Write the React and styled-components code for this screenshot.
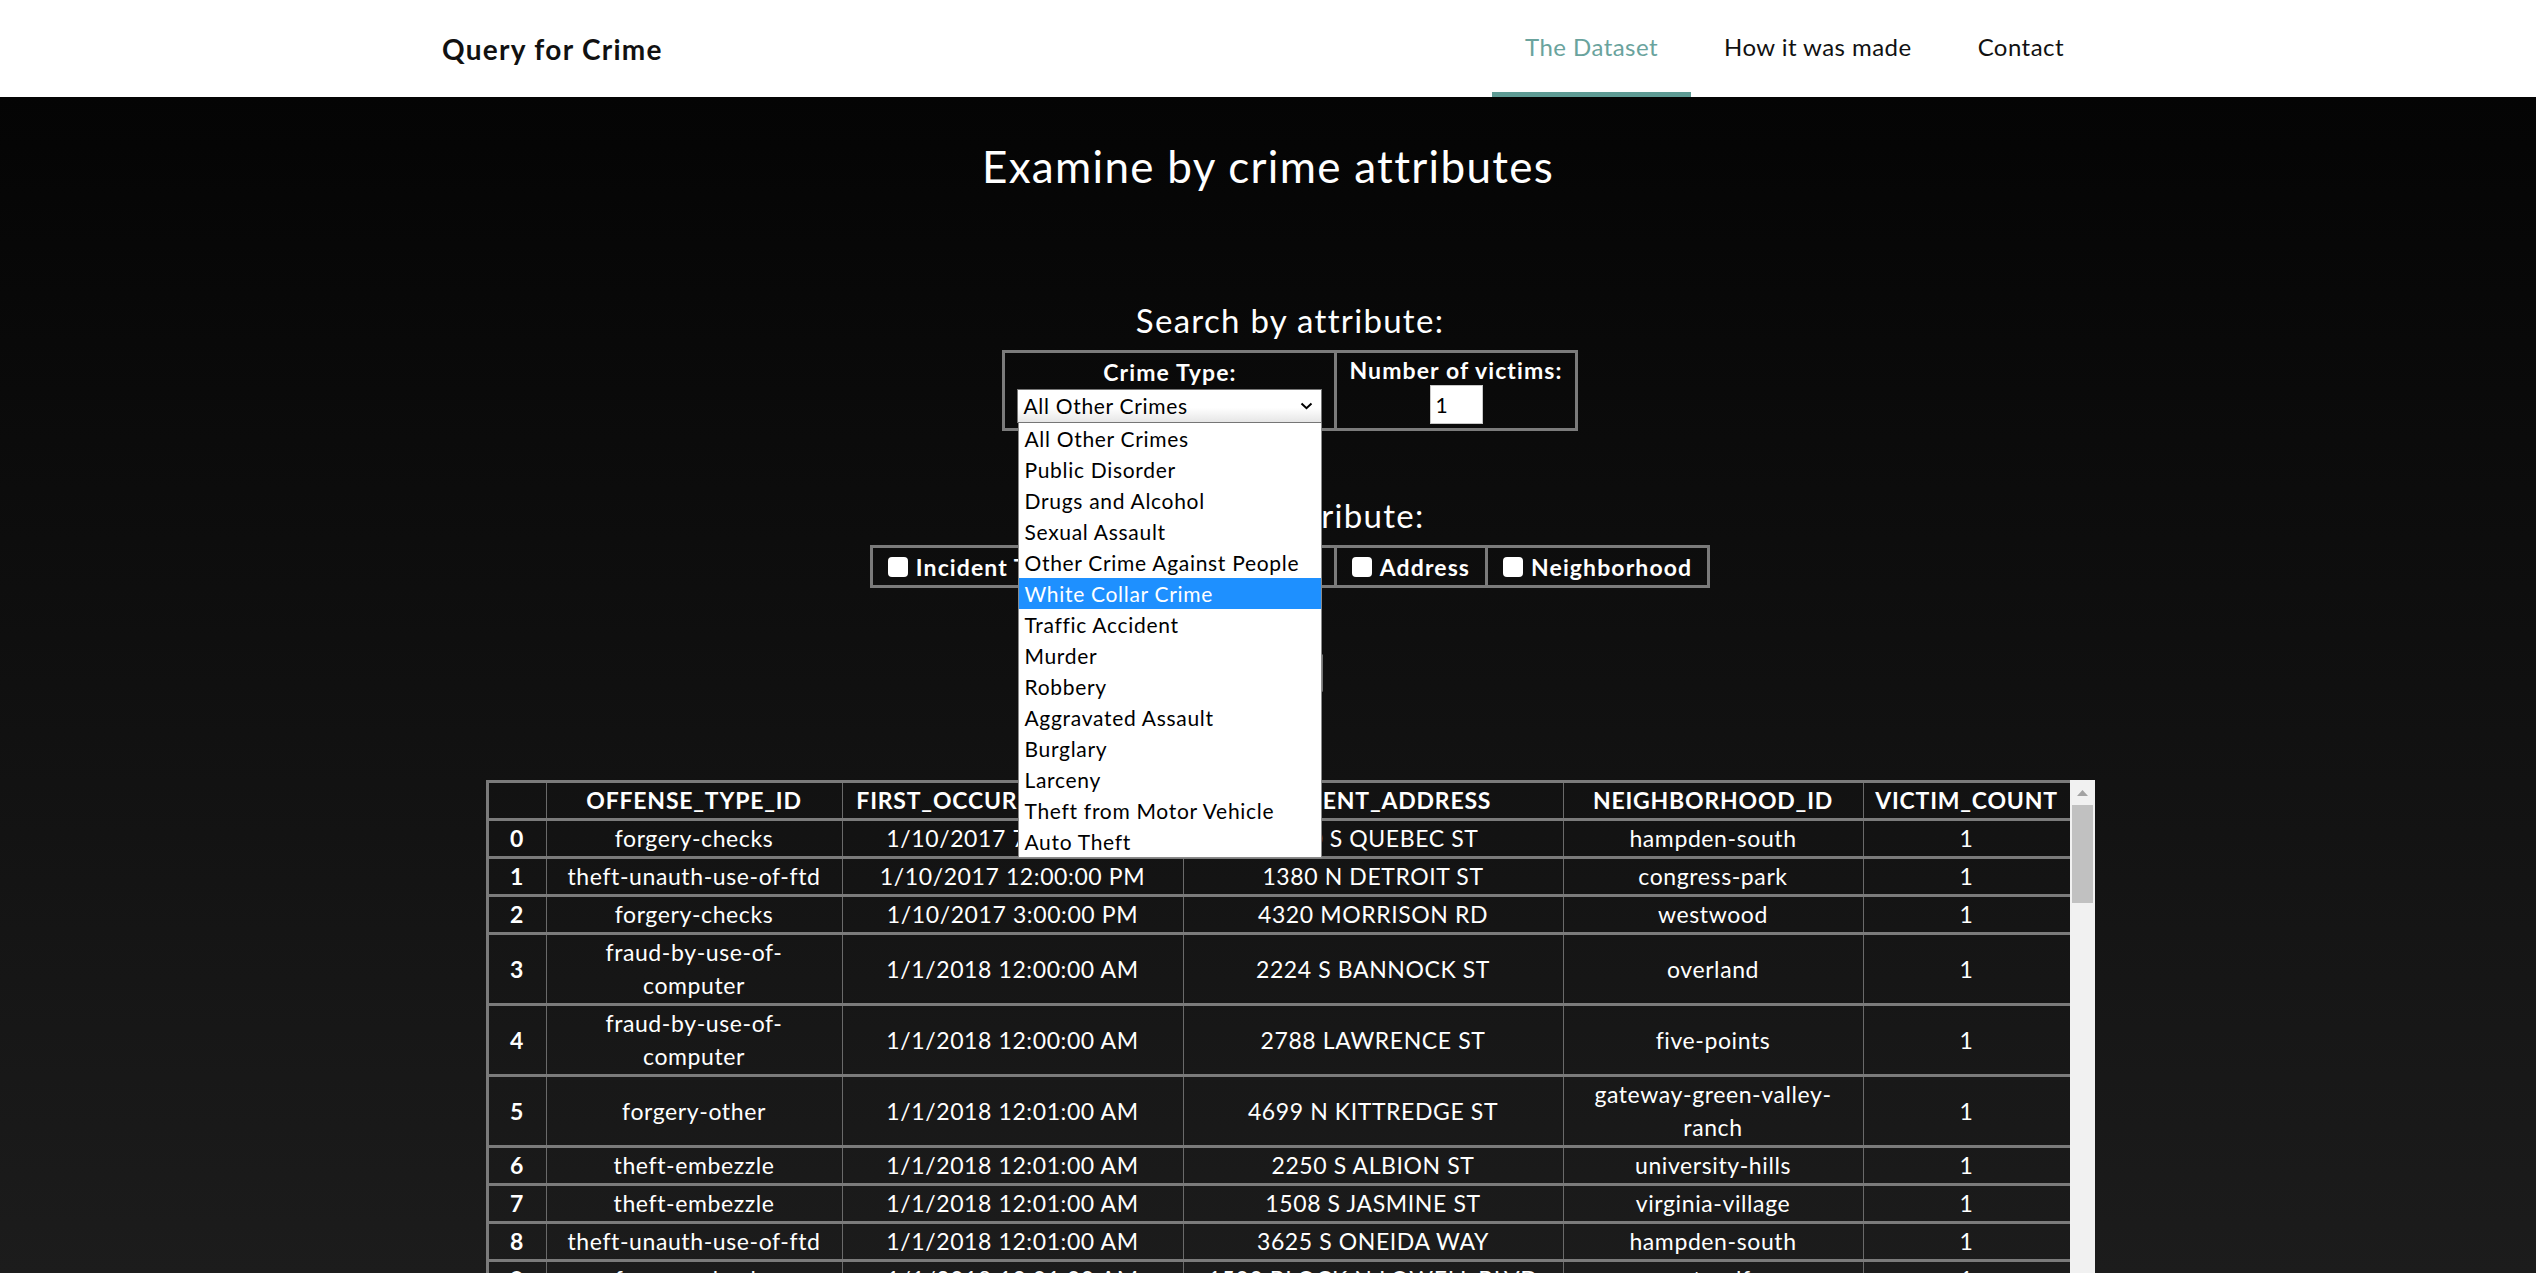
import React from "react";
import styled, { createGlobalStyle } from "styled-components";

const GlobalStyle = createGlobalStyle`
  html, body {
    margin: 0;
    padding: 0;
    overflow: hidden;
  }
  body {
    font-family: Lato, "Open Sans", sans-serif;
    background: #1c1c1c;
  }
`;

const NavBar = styled.header`
  background: #fff;
  height: 97px;
`;

const NavInner = styled.div`
  width: 1652px;
  height: 100%;
  margin: 0 auto;
  display: flex;
  justify-content: space-between;
  align-items: stretch;
`;

const Brand = styled.div`
  display: flex;
  align-items: center;
  font-size: 28px;
  font-weight: 700;
  color: #111;
  letter-spacing: 1.3px;
`;

const NavLinks = styled.nav`
  display: flex;
  margin-right: -3px;
`;

const NavLink = styled.a`
  display: flex;
  align-items: center;
  padding: 0 33px;
  box-sizing: border-box;
  font-size: 24px;
  letter-spacing: 0.45px;
  color: ${(p) => (p.$active ? "#6aa39d" : "#111")};
  border-bottom: 5px solid ${(p) => (p.$active ? "#5e9b94" : "transparent")};
  cursor: pointer;
`;

const Main = styled.main`
  padding-top: 44px;
  color: #fff;
  text-align: center;
  background: linear-gradient(#040404, #1c1c1c) 0 0 / 100% 1176px no-repeat, #1c1c1c;
`;

const Title = styled.h1`
  margin: 0;
  font-size: 44px;
  font-weight: 400;
  letter-spacing: 1.3px;
  line-height: 50px;
`;

const SearchArea = styled.section`
  padding-left: 44px;
  display: flex;
  flex-direction: column;
  align-items: center;
`;

const SubTitle = styled.h2`
  margin: ${(p) => p.$top}px 0 12px;
  font-size: 33px;
  font-weight: 400;
  letter-spacing: 1.3px;
  line-height: 36px;
`;

const AttrTable = styled.table`
  border-collapse: collapse;
  border: 3px solid #7b7b7b;
`;

const AttrCell = styled.td`
  border: 3px solid #7b7b7b;
  padding: ${(p) => p.$pad || "4px 12px"};
  vertical-align: middle;
`;

const AttrLabel = styled.div`
  font-size: 23px;
  font-weight: 700;
  letter-spacing: 1.1px;
  line-height: 26px;
`;

const SelectWrap = styled.div`
  position: relative;
  width: 305px;
  margin-top: 4px;
`;

const SelectBox = styled.div`
  height: 34px;
  box-sizing: border-box;
  border: 1px solid #767676;
  background: linear-gradient(#fff 55%, #e6e6e6);
  display: flex;
  align-items: center;
  justify-content: space-between;
  padding: 0 8px 0 5px;
  font-size: 21px;
  letter-spacing: 0.7px;
  color: #000;
  text-align: left;
`;

const OptionList = styled.ul`
  position: absolute;
  top: 100%;
  left: 1px;
  z-index: 10;
  width: 304px;
  margin: 0;
  padding: 0;
  list-style: none;
  background: #fff;
  border: 1px solid #8a8a8a;
  border-top: none;
  box-sizing: border-box;
  text-align: left;
`;

const Option = styled.li`
  height: 31px;
  line-height: 31px;
  padding-left: 5px;
  font-size: 21px;
  letter-spacing: 0.7px;
  color: ${(p) => (p.$selected ? "#fff" : "#000")};
  background: ${(p) => (p.$selected ? "#1e90ff" : "transparent")};
  white-space: nowrap;
`;

const NumberInput = styled.input`
  width: 53px;
  height: 39px;
  box-sizing: border-box;
  border: 1px solid #c8c8c8;
  padding: 0 5px;
  font-family: inherit;
  font-size: 21px;
  color: #000;
  background: #fff;
  outline: none;
  margin-top: 2px;
`;

const CheckLabel = styled.label`
  display: flex;
  align-items: center;
  gap: 8px;
  height: 37px;
  font-size: 23px;
  font-weight: 700;
  letter-spacing: 1.1px;
  white-space: nowrap;
`;

const Check = styled.input`
  appearance: none;
  width: 20px;
  height: 20px;
  margin: 0;
  border-radius: 4px;
  background: #fff;
`;

const SearchButton = styled.button`
  margin-top: 65px;
  width: 66px;
  height: 40px;
  background: #efefef;
  border: 1px solid #767676;
  border-radius: 3px;
  font-family: inherit;
  font-size: 19px;
  color: #000;
  padding: 0;
`;

const TableFrame = styled.div`
  margin-top: 87px;
  width: 1609px;
  height: 600px;
  display: flex;
  align-items: stretch;
`;

const TableViewport = styled.div`
  flex: 1;
  overflow: hidden;
`;

const ScrollTrack = styled.div`
  width: 25px;
  background: #f1f1f1;
  display: flex;
  flex-direction: column;
  align-items: center;
`;

const ScrollArrow = styled.div`
  height: 25px;
  width: 100%;
  display: flex;
  justify-content: center;
  padding-top: 10px;
  box-sizing: border-box;
`;

const ScrollThumb = styled.div`
  width: 21px;
  height: 98px;
  background: #c1c1c1;
`;

const DataTable = styled.table`
  width: 1584px;
  table-layout: fixed;
  border-collapse: collapse;
  border: 3px solid #7b7b7b;
`;

const Row = styled.tr`
  border-top: 3px solid #7b7b7b;
`;

const HeadCell = styled.th`
  border-left: 1px solid #6a6a6a;
  padding: 1px 10px;
  font-size: 23px;
  font-weight: 700;
  letter-spacing: 0.8px;
  line-height: 33px;
  white-space: nowrap;
  overflow: hidden;
`;

const Cell = styled.td`
  border-left: 1px solid #6a6a6a;
  padding: 1px 14px;
  font-size: 23px;
  letter-spacing: 0.6px;
  line-height: 33px;
  font-weight: ${(p) => (p.$bold ? 700 : 400)};
  text-align: center;
  vertical-align: middle;
  overflow-wrap: break-word;
`;

const crimeTypes = [
  "All Other Crimes",
  "Public Disorder",
  "Drugs and Alcohol",
  "Sexual Assault",
  "Other Crime Against People",
  "White Collar Crime",
  "Traffic Accident",
  "Murder",
  "Robbery",
  "Aggravated Assault",
  "Burglary",
  "Larceny",
  "Theft from Motor Vehicle",
  "Auto Theft",
];

const columns = [
  { key: "idx", label: "", width: 59 },
  { key: "offense", label: "OFFENSE_TYPE_ID", width: 296 },
  { key: "date", label: "FIRST_OCCURRENCE_DATE", width: 341 },
  { key: "address", label: "INCIDENT_ADDRESS", width: 380 },
  { key: "hood", label: "NEIGHBORHOOD_ID", width: 300 },
  { key: "victims", label: "VICTIM_COUNT", width: 208 },
];

const rows = [
  ["forgery-checks", "1/10/2017 7:00:00 AM", "3700 S QUEBEC ST", "hampden-south"],
  ["theft-unauth-use-of-ftd", "1/10/2017 12:00:00 PM", "1380 N DETROIT ST", "congress-park"],
  ["forgery-checks", "1/10/2017 3:00:00 PM", "4320 MORRISON RD", "westwood"],
  ["fraud-by-use-of-computer", "1/1/2018 12:00:00 AM", "2224 S BANNOCK ST", "overland"],
  ["fraud-by-use-of-computer", "1/1/2018 12:00:00 AM", "2788 LAWRENCE ST", "five-points"],
  ["forgery-other", "1/1/2018 12:01:00 AM", "4699 N KITTREDGE ST", "gateway-green-valley-ranch"],
  ["theft-embezzle", "1/1/2018 12:01:00 AM", "2250 S ALBION ST", "university-hills"],
  ["theft-embezzle", "1/1/2018 12:01:00 AM", "1508 S JASMINE ST", "virginia-village"],
  ["theft-unauth-use-of-ftd", "1/1/2018 12:01:00 AM", "3625 S ONEIDA WAY", "hampden-south"],
  ["forgery-checks", "1/1/2018 12:01:00 AM", "1500 BLOCK N LOWELL BLVD", "west-colfax"],
  ["theft-unauth-use-of-ftd", "1/1/2018 12:01:00 AM", "1240 N YOSEMITE ST", "east-colfax"],
].map((r, i) => ({ id: i, offense: r[0], date: r[1], address: r[2], hood: r[3], victims: 1 }));

const attributes = ["Incident Type", "Occurrence Date", "Address", "Neighborhood"];

const App = () => {
  return (
    <>
      <GlobalStyle />
      <NavBar>
        <NavInner>
          <Brand>Query for Crime</Brand>
          <NavLinks>
            <NavLink $active>The Dataset</NavLink>
            <NavLink>How it was made</NavLink>
            <NavLink>Contact</NavLink>
          </NavLinks>
        </NavInner>
      </NavBar>
      <Main>
        <Title>Examine by crime attributes</Title>
        <SearchArea>
          <SubTitle $top={111}>Search by attribute:</SubTitle>
          <AttrTable>
            <tbody>
              <tr>
                <AttrCell>
                  <AttrLabel>Crime Type:</AttrLabel>
                  <SelectWrap>
                    <SelectBox>
                      <span>All Other Crimes</span>
                      <svg width="13" height="8" viewBox="0 0 13 8">
                        <polyline points="1.5,1.5 6.5,6.2 11.5,1.5" fill="none" stroke="#000" strokeWidth="2" />
                      </svg>
                    </SelectBox>
                    <OptionList>
                      {crimeTypes.map((c) => (
                        <Option key={c} $selected={c === "White Collar Crime"}>
                          {c}
                        </Option>
                      ))}
                    </OptionList>
                  </SelectWrap>
                </AttrCell>
                <AttrCell>
                  <AttrLabel>Number of victims:</AttrLabel>
                  <NumberInput type="text" defaultValue="1" />
                </AttrCell>
              </tr>
            </tbody>
          </AttrTable>

          <SubTitle $top={66}>Sort by attribute:</SubTitle>
          <AttrTable>
            <tbody>
              <tr>
                {attributes.map((a) => (
                  <AttrCell key={a} $pad="0 15px">
                    <CheckLabel>
                      <Check type="checkbox" />
                      {a}
                    </CheckLabel>
                  </AttrCell>
                ))}
              </tr>
            </tbody>
          </AttrTable>

          <SearchButton>Search</SearchButton>

          <TableFrame>
            <TableViewport>
              <DataTable>
                <colgroup>
                  {columns.map((c) => (
                    <col key={c.key} style={{ width: c.width }} />
                  ))}
                </colgroup>
                <thead>
                  <Row>
                    {columns.map((c) => (
                      <HeadCell key={c.key}>{c.label}</HeadCell>
                    ))}
                  </Row>
                </thead>
                <tbody>
                  {rows.map((r) => (
                    <Row key={r.id}>
                      <Cell $bold>{r.id}</Cell>
                      <Cell>{r.offense}</Cell>
                      <Cell>{r.date}</Cell>
                      <Cell>{r.address}</Cell>
                      <Cell>{r.hood}</Cell>
                      <Cell>{r.victims}</Cell>
                    </Row>
                  ))}
                </tbody>
              </DataTable>
            </TableViewport>
            <ScrollTrack>
              <ScrollArrow>
                <svg width="11" height="6" viewBox="0 0 11 6">
                  <polygon points="0,6 5.5,0 11,6" fill="#a3a3a3" />
                </svg>
              </ScrollArrow>
              <ScrollThumb />
            </ScrollTrack>
          </TableFrame>
        </SearchArea>
      </Main>
    </>
  );
};

export default App;
